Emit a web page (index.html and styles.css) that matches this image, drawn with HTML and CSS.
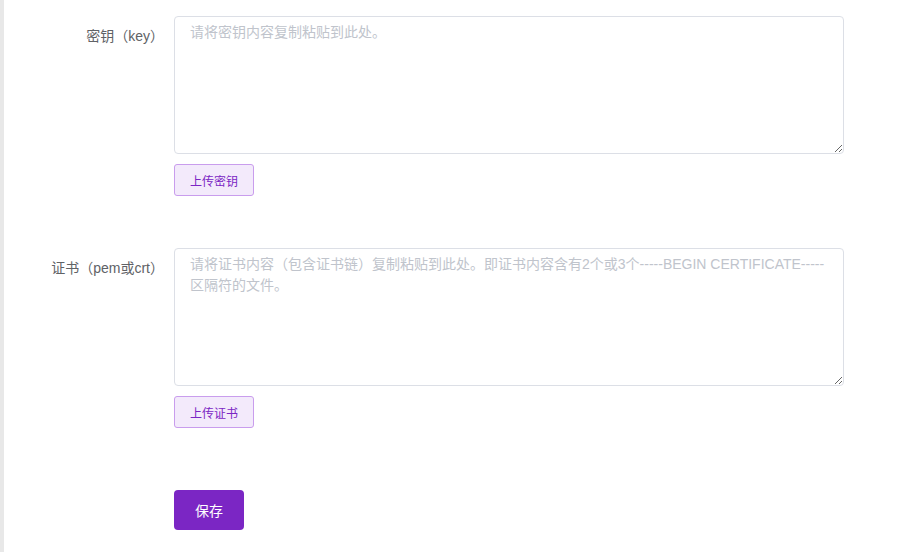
FILE: index.html
```html
<!DOCTYPE html>
<html lang="zh-CN">
<head>
    <meta charset="UTF-8">
    <title>证书设置</title>
    <link rel="stylesheet" href="styles.css">
</head>
<body>
<div class="page">
    <div class="form">
        <div class="form_item">
            <label class="form_label" for="keyId">密钥（key）</label>
            <div class="form_content">
                <textarea id="keyId" class="text_box" placeholder="请将密钥内容复制粘贴到此处。"></textarea>
                <button class="upload_btn">上传密钥</button>
            </div>
        </div>
        <div class="form_item">
            <label class="form_label" for="certId">证书（pem或crt）</label>
            <div class="form_content">
                <textarea id="certId" class="text_box" placeholder="请将证书内容（包含证书链）复制粘贴到此处。即证书内容含有2个或3个-----BEGIN CERTIFICATE-----区隔符的文件。"></textarea>
                <button class="upload_btn">上传证书</button>
            </div>
        </div>
        <div class="form_item form_actions">
            <div class="form_label"></div>
            <div class="form_content">
                <button class="save_btn">保存</button>
            </div>
        </div>
    </div>
</div>
</body>
</html>
```

FILE: styles.css
```css
html, body {
    margin: 0;
    height: 100%;
}

body {
    font-family: "Liberation Sans", "Noto Sans CJK SC", sans-serif;
    font-size: 14px;
    color: #606266;
    background: #fff;
}

.page {
    min-height: 100%;
    border-left: 4px solid #e8e8e8;
    box-sizing: border-box;
    padding-top: 16px;
}

.form_item {
    display: flex;
    margin-bottom: 52px;
}

.form_label {
    width: 170px;
    flex-shrink: 0;
    box-sizing: border-box;
    padding-right: 10px;
    text-align: right;
    line-height: 40px;
    color: #606266;
}

.form_content {
    width: 670px;
}

.text_box {
    display: block;
    width: 100%;
    height: 138px;
    box-sizing: border-box;
    padding: 5px 15px;
    border: 1px solid #dcdfe6;
    border-radius: 4px;
    font-family: inherit;
    font-size: 14px;
    line-height: 21px;
    color: #606266;
    resize: vertical;
    outline: none;
}

.text_box::placeholder {
    color: #c0c4cc;
}

.upload_btn {
    display: block;
    margin-top: 10px;
    width: 80px;
    height: 32px;
    padding: 0;
    border: 1px solid #c99ded;
    border-radius: 3px;
    background: #f3eafb;
    color: #7b26c4;
    font-family: inherit;
    font-size: 12px;
}

.form_actions {
    padding-top: 10px;
}

.save_btn {
    width: 70px;
    height: 40px;
    padding: 0;
    border: none;
    border-radius: 4px;
    background: #7b26c4;
    color: #fff;
    font-family: inherit;
    font-size: 14px;
}
```
